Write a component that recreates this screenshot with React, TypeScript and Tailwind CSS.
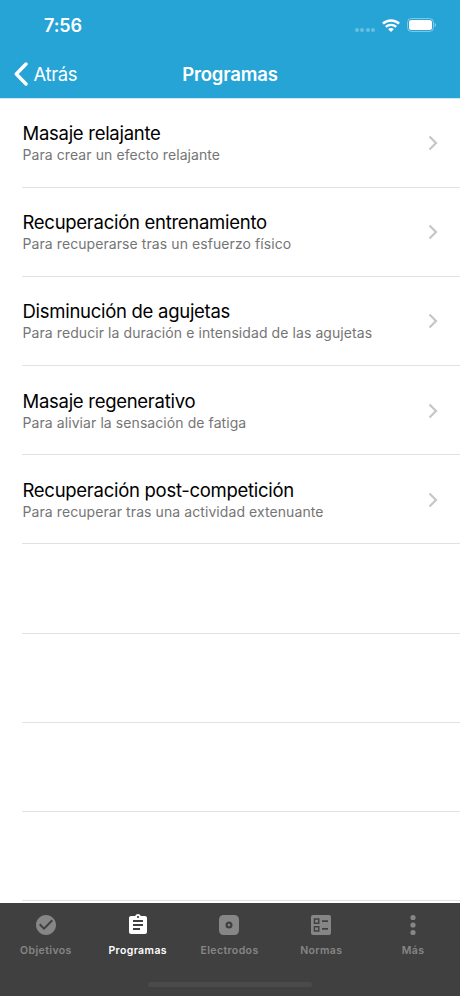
import React from 'react';

interface Program {
  title: string;
  description: string;
}

interface Tab {
  label: string;
  icon: React.ReactNode;
}

const programs: Program[] = [
  { title: 'Masaje relajante', description: 'Para crear un efecto relajante' },
  { title: 'Recuperación entrenamiento', description: 'Para recuperarse tras un esfuerzo físico' },
  { title: 'Disminución de agujetas', description: 'Para reducir la duración e intensidad de las agujetas' },
  { title: 'Masaje regenerativo', description: 'Para aliviar la sensación de fatiga' },
  { title: 'Recuperación post-competición', description: 'Para recuperar tras una actividad extenuante' },
];

const emptyRows = [0, 1, 2, 3];

const tabs: Tab[] = [
  {
    label: 'Objetivos',
    icon: (
      <path d="M12 2C6.48 2 2 6.48 2 12s4.48 10 10 10 10-4.48 10-10S17.52 2 12 2zm-2 15l-5-5 1.41-1.41L10 14.17l7.59-7.59L19 8l-9 9z" />
    ),
  },
  {
    label: 'Programas',
    icon: (
      <path d="M19 3h-4.18C14.4 1.84 13.3 1 12 1c-1.3 0-2.4.84-2.82 2H5c-1.1 0-2 .9-2 2v14c0 1.1.9 2 2 2h14c1.1 0 2-.9 2-2V5c0-1.1-.9-2-2-2zm-7 0c.55 0 1 .45 1 1s-.45 1-1 1-1-.45-1-1 .45-1 1-1zm2 14H7v-2h7v2zm3-4H7v-2h10v2zm0-4H7V7h10v2z" />
    ),
  },
  {
    label: 'Electrodos',
    icon: (
      <path
        fillRule="evenodd"
        d="M6.5 2h11A4.5 4.5 0 0 1 22 6.5v11a4.5 4.5 0 0 1-4.5 4.5h-11A4.5 4.5 0 0 1 2 17.5v-11A4.5 4.5 0 0 1 6.5 2zM12 8.5a3.5 3.5 0 1 0 0 7 3.5 3.5 0 0 0 0-7zm0 2.3a1.2 1.2 0 1 1 0 2.4 1.2 1.2 0 0 1 0-2.4z"
      />
    ),
  },
  {
    label: 'Normas',
    icon: (
      <path
        fillRule="evenodd"
        d="M4 2h16a2 2 0 0 1 2 2v16a2 2 0 0 1-2 2H4a2 2 0 0 1-2-2V4a2 2 0 0 1 2-2zM4.7 5.3v5.7h5.8V5.3zm1.4 1.4h3v2.9h-3zM4.7 13v5.7h5.8V13zm1.4 1.4h3v2.9h-3zM13 7.3V9h6V7.3zM13 15v1.7h6V15z"
      />
    ),
  },
  {
    label: 'Más',
    icon: (
      <>
        <circle cx="12" cy="4.5" r="2.6" />
        <circle cx="12" cy="12" r="2.6" />
        <circle cx="12" cy="19.5" r="2.6" />
      </>
    ),
  },
];

const StatusBar = () => {
  return (
    <div className="h-[50px] flex items-center justify-between pl-[44px] pr-[24px]">
      <span className="pt-0.5 text-[18px] leading-none font-semibold tracking-[-0.1px]">7:56</span>
      <div className="flex items-center">
        <div className="flex gap-[1.5px] mt-[9px] mr-[7px] opacity-30">
          <span className="w-1 h-1 rounded-full bg-white" />
          <span className="w-1 h-1 rounded-full bg-white" />
          <span className="w-1 h-1 rounded-full bg-white" />
          <span className="w-1 h-1 rounded-full bg-white" />
        </div>
        <svg className="w-[18px] h-[13px] mr-[7px]" viewBox="0 0 18 13" fill="none" stroke="white">
          <path d="M.9 4.7C5.3.3 12.7.3 17.1 4.7" strokeWidth="2.5" />
          <path d="M3.8 7.9c2.9-2.8 7.5-2.8 10.4 0" strokeWidth="2.3" />
          <path d="M9 13L6.2 10.2c1.6-1.5 4-1.5 5.6 0z" fill="white" stroke="none" />
        </svg>
        <svg className="w-[29px] h-[14px]" viewBox="0 0 29 14">
          <rect x=".5" y=".5" width="26" height="13" rx="4" fill="none" stroke="white" strokeOpacity=".4" />
          <rect x="2" y="2" width="23" height="10" rx="2.5" fill="white" />
          <path d="M27.7 5v4c1.5-.6 1.5-3.4 0-4z" fill="white" fillOpacity=".5" />
        </svg>
      </div>
    </div>
  );
};

const NavBar = () => {
  return (
    <div className="h-12 grid grid-cols-[1fr_auto_1fr] items-center">
      <button className="flex items-center pl-[14px] text-[18.5px] leading-none tracking-[-0.4px]">
        <svg className="w-[15px] h-6 mr-[4.5px]" viewBox="0 0 15 24" fill="none" stroke="white" strokeWidth="3.4" strokeLinecap="round" strokeLinejoin="round">
          <path d="M12 2L2.3 12 12 22" />
        </svg>
        Atrás
      </button>
      <h1 className="text-[18.5px] leading-none font-semibold tracking-[-0.15px]">Programas</h1>
      <span />
    </div>
  );
};

const ProgramRow = ({ program }: { program?: Program }) => {
  return (
    <li className="h-[89.2px] ml-[22px] pl-[0.5px] flex items-center justify-between border-b border-[#e2e2e2]">
      {program && (
        <>
          <div className="pt-px flex flex-col whitespace-nowrap">
            <h2 className="text-[18.5px] leading-6 text-black tracking-[-0.28px]">{program.title}</h2>
            <p className="text-[14px] leading-5 text-[#757575] tracking-[0.08px]">{program.description}</p>
          </div>
          <svg className="w-[10px] h-4 mt-px mr-[22px]" viewBox="0 0 10 16" fill="none" stroke="#c6c6c9" strokeWidth="2.2">
            <path d="M1.5 1.5L8 8l-6.5 6.5" />
          </svg>
        </>
      )}
    </li>
  );
};

const TabBar = () => {
  const active = 'Programas';

  return (
    <nav className="h-[93px] shrink-0 bg-[#404040] flex flex-col items-center justify-between">
      <div className="w-full grid grid-cols-5 pt-[10px] pr-px">
        {tabs.map((tab) => (
          <button
            key={tab.label}
            className={`flex flex-col items-center font-semibold ${tab.label === active ? 'text-white' : 'text-[#868686]'}`}
          >
            <svg className="w-6 h-6" viewBox="0 0 24 24" fill="currentColor">
              {tab.icon}
            </svg>
            <span className="mt-[7px] text-[10.5px] leading-[14px] tracking-[0.4px]">{tab.label}</span>
          </button>
        ))}
      </div>
      <div className="w-[164px] h-[5px] mb-[9px] rounded-full bg-[#4a4a4a]" />
    </nav>
  );
};

const App = () => {
  return (
    <div className="w-full h-screen flex flex-col overflow-hidden bg-white font-['Inter',sans-serif]">
      <header className="h-[98px] shrink-0 bg-[#27a4d6] text-white">
        <StatusBar />
        <NavBar />
      </header>
      <ul className="flex-1 min-h-0 overflow-hidden pt-[0.5px] shadow-[inset_0_1px_0_#cfe6f5]">
        {programs.map((program) => (
          <ProgramRow key={program.title} program={program} />
        ))}
        {emptyRows.map((row) => (
          <ProgramRow key={row} />
        ))}
      </ul>
      <TabBar />
    </div>
  );
};

export default App;
